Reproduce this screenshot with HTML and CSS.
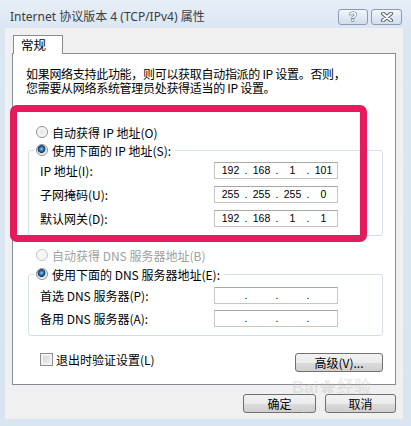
FILE: index.html
```html
<!DOCTYPE html>
<html lang="zh-CN">
<head>
    <meta charset="UTF-8">
    <title>Internet 协议版本 4 (TCP/IPv4) 属性</title>
<link rel="stylesheet" href="styles.css">
</head>
<body>
<div class="window">
    <div class="titlebar">
        <span class="title">Internet 协议版本 4 (TCP/IPv4) 属性</span>
        <div class="caption-btns">
            <span class="cap-btn help">?</span>
            <span class="cap-btn close">
                <svg width="14" height="10" viewBox="0 0 14 10">
                    <path d="M3 1.5 L11 8.5 M11 1.5 L3 8.5" stroke="#5a5f66" stroke-width="4" stroke-linecap="round"/>
                    <path d="M3 1.5 L11 8.5 M11 1.5 L3 8.5" stroke="#fff" stroke-width="2" stroke-linecap="round"/>
                </svg>
            </span>
        </div>
    </div>

    <div class="client">
        <div class="tabs"><span class="tab">常规</span></div>

        <div class="panel">
            <p class="intro">如果网络支持此功能，则可以获取自动指派的 IP 设置。否则，<br>您需要从网络系统管理员处获得适当的 IP 设置。</p>

            <label class="opt first ip-auto"><span class="radio"></span>自动获得 IP 地址(O)</label>

            <fieldset class="group ip-group">
                <legend><label class="opt"><span class="radio on"></span>使用下面的 IP 地址(S):</label></legend>
                <div class="row">
                    <span class="lbl">IP 地址(I):</span>
                    <span class="ipbox"><i>192</i><b>.</b><i>168</i><b>.</b><i>1</i><b>.</b><i>101</i></span>
                </div>
                <div class="row">
                    <span class="lbl">子网掩码(U):</span>
                    <span class="ipbox"><i>255</i><b>.</b><i>255</i><b>.</b><i>255</i><b>.</b><i>0</i></span>
                </div>
                <div class="row">
                    <span class="lbl">默认网关(D):</span>
                    <span class="ipbox"><i>192</i><b>.</b><i>168</i><b>.</b><i>1</i><b>.</b><i>1</i></span>
                </div>
            </fieldset>

            <label class="opt first dns-auto disabled"><span class="radio off"></span>自动获得 DNS 服务器地址(B)</label>

            <fieldset class="group dns-group">
                <legend><label class="opt"><span class="radio on"></span>使用下面的 DNS 服务器地址(E):</label></legend>
                <div class="row">
                    <span class="lbl">首选 DNS 服务器(P):</span>
                    <span class="ipbox"><i></i><b>.</b><i></i><b>.</b><i></i><b>.</b><i></i></span>
                </div>
                <div class="row">
                    <span class="lbl">备用 DNS 服务器(A):</span>
                    <span class="ipbox"><i></i><b>.</b><i></i><b>.</b><i></i><b>.</b><i></i></span>
                </div>
            </fieldset>

            <div class="bottom-row">
                <label class="check"><span class="box"></span>退出时验证设置(L)</label>
                <span class="btn adv">高级(V)...</span>
            </div>
        </div>

        <div class="footer">
            <span class="btn ok">确定</span>
            <span class="btn cancel">取消</span>
        </div>
    </div>

    <!-- 标注框 -->
    <div class="highlight"></div>
    <div class="watermark">Bai<span class="paw">✿</span>经验<small>jingyan.baidu.com</small></div>
</div>
</body>
</html>
```

FILE: styles.css
```css
*{margin:0;padding:0;box-sizing:border-box;}
body{background:#dbe6f3;font-family:"Noto Sans CJK SC","Noto Sans",sans-serif;font-size:12px;color:#000;}
.window{width:411px;height:426px;position:relative;overflow:hidden;background:linear-gradient(#e6eef8,#dbe6f3 30px,#dae5f2);}

/* 标题栏 */
.titlebar{height:28px;display:flex;justify-content:space-between;align-items:flex-start;}
.title{margin:9px 0 0 10px;line-height:16px;font-family:"Noto Sans","Noto Sans CJK SC",sans-serif;font-size:12px;color:#3c3c3c;}
.caption-btns{display:flex;gap:3px;margin:9px 9px 0 0;}
.cap-btn{height:16px;border:1px solid #8c9bb0;border-radius:3px;background:linear-gradient(#f3f6fb,#e1e9f4 50%,#d3deec);display:flex;align-items:center;justify-content:center;}
.help{width:30px;font-family:"Liberation Sans",sans-serif;font-weight:bold;font-size:13px;color:#fff;-webkit-text-stroke:1px #5a5f66;paint-order:stroke fill;line-height:14px;}
.close{width:31px;}

/* 客户区 */
.client{margin:0 8px 0 5px;height:391px;background:#f0f0f0;padding:7px 7px 6px 7px;}
.tabs{display:flex;padding-left:1px;}
.tab{position:relative;z-index:1;height:19px;margin-bottom:-1px;width:50px;padding-left:7px;line-height:17px;font-size:12.5px;background:#fff;border:1px solid #898c95;border-bottom:none;}
.panel{height:332px;background:#fff;border:1px solid #898c95;padding:13px 0 0 13px;}
.intro{line-height:14px;white-space:nowrap;letter-spacing:-0.3px;}

.opt{display:flex;align-items:center;height:16px;white-space:nowrap;}
.opt.first{margin-left:10px;}
.ip-auto{margin-top:29px;}
.dns-auto{margin-top:11px;}
.disabled{color:#a0a0a0;}
.radio{width:12px;height:12px;border-radius:50%;border:1px solid #8e8f8f;margin-right:4px;flex:none;
    background:radial-gradient(circle at 50% 50%,#e4e4e4 0,#f0f0f0 3px,#fbfbfb 5px);}
.radio.on{background:radial-gradient(circle at 45% 40%,#a8d4f6 0,#3f86c8 1.5px,#1a4f88 3px,#12385f 3.6px,#d8d8d8 4.2px,#f6f6f6 5.5px);}
.radio.off{border-color:#c4c4c4;background:#f6f6f6;}

/* 分组框 */
.group{border:1px solid #d5dfe5;border-radius:3px;margin:2px 12px 0 2px;padding:0 44px 8px 5px;min-width:0;}
.group legend{padding:0 2px;}
.group legend .opt{padding-right:2px;}
.dns-group{margin-top:3px;}
.row{display:flex;align-items:center;height:17px;padding-left:6px;white-space:nowrap;}
.ip-group .row:first-of-type{margin-top:4px;}
.ip-group .row + .row{margin-top:7px;}
.dns-group .row:first-of-type{margin-top:5px;}
.dns-group .row + .row{margin-top:6px;}
.lbl{flex:1;}
.ipbox{width:124px;height:17px;border:1px solid #c6c6c6;border-top-color:#a9a9a9;display:flex;padding-left:3px;
    font-family:"Liberation Sans",sans-serif;font-size:10.5px;line-height:15px;}
.ipbox i{font-style:normal;width:25px;text-align:center;}
.ipbox b{font-weight:normal;width:6px;text-align:center;}

/* 底部 */
.bottom-row{display:flex;justify-content:space-between;align-items:flex-start;margin:16px 12px 0 14px;}
.check{display:flex;align-items:center;height:14px;}
.check .box{width:13px;height:13px;border:1px solid #8f8f8f;margin-right:3px;
    background:linear-gradient(135deg,#cfcfcf,#f4f4f4);box-shadow:inset 0 0 0 2px #f2f2f2;}
.btn{display:flex;align-items:center;justify-content:center;height:19px;border:1px solid #707070;border-radius:3px;
    background:linear-gradient(#f2f2f2,#ebebeb 50%,#dddddd 51%,#cfcfcf);}
.adv{width:88px;margin-top:1px;}
.footer{display:flex;justify-content:flex-end;gap:9px;margin-top:9px;}
.ok{width:73px;}
.cancel{width:71px;}

/* 标注 */
.highlight{position:absolute;left:10px;top:105px;width:357px;height:137px;border:7px solid #e41b5c;border-radius:7px;}
.watermark{position:absolute;left:292px;top:379px;font-family:"Liberation Sans",sans-serif;font-size:17px;font-weight:bold;color:rgba(190,190,190,0.3);line-height:18px;white-space:nowrap;}
.watermark .paw{font-size:15px;margin:0 2px;}
.watermark small{display:block;font-size:9px;font-weight:normal;line-height:10px;margin-top:6px;}
```
